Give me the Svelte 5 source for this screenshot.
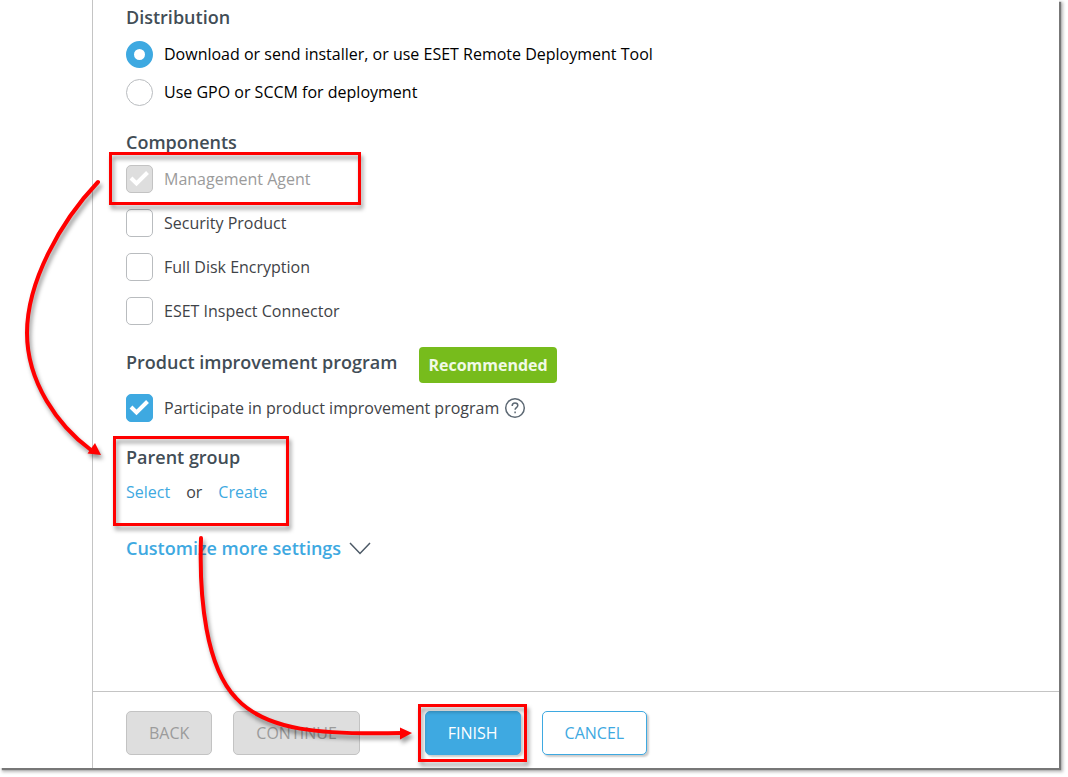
<script lang="ts">
  interface ComponentItem {
    id: string;
    label: string;
    checked: boolean;
    locked?: boolean;
  }

  let distribution = $state('installer');
  let participate = $state(true);

  let components: ComponentItem[] = $state([
    { id: 'agent', label: 'Management Agent', checked: true, locked: true },
    { id: 'security', label: 'Security Product', checked: false },
    { id: 'encryption', label: 'Full Disk Encryption', checked: false },
    { id: 'inspect', label: 'ESET Inspect Connector', checked: false }
  ]);
</script>

<div class="page">
  <div class="window">
    <div class="sidebar"></div>

    <main class="wizard">
      <form class="content" id="installer-form">
        <h2>Distribution</h2>
        <label class="radio-row">
          <input type="radio" name="distribution" value="installer" bind:group={distribution} />
          <span>Download or send installer, or use ESET Remote Deployment Tool</span>
        </label>
        <label class="radio-row">
          <input type="radio" name="distribution" value="gpo" bind:group={distribution} />
          <span>Use GPO or SCCM for deployment</span>
        </label>

        <h2 class="components">Components</h2>
        {#each components as item (item.id)}
          <label class="check-row" class:locked={item.locked}>
            <span class="box">
              <input type="checkbox" bind:checked={item.checked} disabled={item.locked} />
              <svg viewBox="0 0 27 28" aria-hidden="true"><path d="M5 13 10.5 18.5 21.500 7.500" /></svg>
            </span>
            <span>{item.label}</span>
          </label>
        {/each}

        <div class="program">
          <h2>Product improvement program</h2>
          <span class="badge">Recommended</span>
        </div>
        <div class="participate">
          <label class="check-row">
            <span class="box">
              <input type="checkbox" bind:checked={participate} />
              <svg viewBox="0 0 27 28" aria-hidden="true"><path d="M5 13 10.5 18.5 21.500 7.500" /></svg>
            </span>
            <span>Participate in product improvement program</span>
          </label>
          <button type="button" class="help" aria-label="Help">
            <svg viewBox="0 0 22 22" aria-hidden="true">
              <circle cx="11" cy="11" r="9.3" />
              <path d="M8.2 8.9c0-1.7 1.2-2.8 2.8-2.8s2.8 1 2.8 2.5c0 2-2.7 2.2-2.7 4.2" />
              <path d="M11.1 14.6v1.6" />
            </svg>
          </button>
        </div>

        <h2 class="parent">Parent group</h2>
        <p class="links">
          <a href="#select">Select</a>
          <span>or</span>
          <a href="#create">Create</a>
        </p>

        <button type="button" class="more">
          Customize more settings
          <svg viewBox="0 0 22 13" aria-hidden="true"><path d="M1 1 11 11.5 21 1" /></svg>
        </button>
      </form>

      <footer>
        <button type="button" class="btn back" disabled>BACK</button>
        <button type="button" class="btn continue" disabled>CONTINUE</button>
        <button type="button" class="btn finish">FINISH</button>
        <button type="button" class="btn cancel">CANCEL</button>
      </footer>
    </main>
  </div>

  <!-- walkthrough marks drawn over the form -->
  <svg class="marks" width="1060" height="777" viewBox="0 0 1060 777" aria-hidden="true">
    <g class="frames">
      <rect x="110.5" y="153.5" width="249" height="50" />
      <rect x="114.5" y="437.5" width="173" height="87" />
      <rect x="419.5" y="705.5" width="106" height="55" />
    </g>
    <g class="arrows">
      <path d="M98 182C60 222 27 282 27 333C27 382 58 426 91 450" />
      <path d="M201 538C199 598 206 667 236 698C266 731 322 735 402 733" />
    </g>
    <g class="heads">
      <path d="M101 455 95 443 87.5 453.5Z" />
      <path d="M412 733 400 727.5V739.5Z" />
    </g>
  </svg>
</div>

<style>
  :global(body) {
    background: #fff;
  }

  .page {
    position: relative;
    display: flex;
    min-height: 100vh;
    box-sizing: border-box;
    padding: 0 9px 9px 0;
    overflow: hidden;
    font-family: 'Open Sans', 'Noto Sans', sans-serif;
    font-size: 16px;
    line-height: 24px;
    color: #3f4347;
  }

  .window {
    flex: 1;
    display: flex;
    background: #fff;
    box-shadow: 2px 2px 1px #777, 3px 3px 3px 1px #bbb;
  }

  .sidebar {
    width: 92px;
    border-right: 1px solid #c4c4c4;
  }

  .wizard {
    flex: 1;
    display: flex;
    flex-direction: column;
  }

  .content {
    flex: 1;
    padding: 5px 33px 0;
  }

  h2 {
    margin: 0;
    font-size: 18px;
    font-weight: 600;
    line-height: 24px;
    color: #424d56;
  }

  .radio-row,
  .check-row {
    display: flex;
    align-items: center;
    gap: 11px;
    width: fit-content;
  }

  .radio-row {
    height: 38px;
    color: #000;
  }

  h2 + .radio-row {
    margin-top: 6px;
  }

  .check-row {
    height: 44px;
  }

  .locked {
    color: #9b9b9b;
  }

  input {
    appearance: none;
    flex: none;
    display: block;
    box-sizing: border-box;
    width: 27px;
    height: 27px;
    margin: 0;
    border: 1px solid #b9bcbf;
    background: #fff;
  }

  input[type='radio'] {
    border-radius: 50%;
  }

  input[type='radio']:checked {
    border: 8px solid #3ea9e1;
  }

  input[type='checkbox'] {
    height: 28px;
    border-radius: 5px;
  }

  input[type='checkbox']:checked {
    border-color: #3ea9e1;
    background: #3ea9e1;
  }

  input[type='checkbox']:disabled {
    border-color: #c3c3c3;
    background: #dedede;
  }

  .box {
    position: relative;
  }

  .box svg {
    position: absolute;
    inset: 0;
    display: none;
    fill: none;
    stroke: #fff;
    stroke-width: 4;
    pointer-events: none;
  }

  .box input:checked + svg {
    display: block;
  }

  .components {
    margin: 19px 0 3px;
  }

  .program {
    display: flex;
    align-items: flex-start;
    gap: 22px;
    margin-top: 14px;
  }

  .program h2 {
    line-height: 30px;
  }

  .badge {
    padding: 0 9px;
    border-radius: 4px;
    background: #77bc1c;
    color: #f1f9e6;
    font-weight: 700;
    line-height: 36px;
  }

  .participate {
    display: flex;
    align-items: center;
    gap: 5px;
    margin-top: 3px;
  }

  button {
    font: inherit;
    cursor: pointer;
  }

  .help {
    width: 22px;
    height: 22px;
    padding: 0;
    border: 0;
    background: none;
  }

  .help svg {
    display: block;
    fill: none;
    stroke: #5c6873;
    stroke-width: 1.5;
  }

  .parent {
    margin-top: 15px;
  }

  .links {
    display: flex;
    gap: 16px;
    margin: 11px 0 0;
  }

  a {
    color: #3ea9e1;
    text-decoration: none;
  }

  .more {
    display: flex;
    align-items: center;
    gap: 8px;
    margin-top: 32px;
    padding: 0;
    border: 0;
    background: none;
    color: #3ea9e1;
    font-size: 18px;
    font-weight: 600;
  }

  .more svg {
    width: 22px;
    height: 13px;
    fill: none;
    stroke: #4c5966;
    stroke-width: 1.5;
  }

  footer {
    display: flex;
    padding: 19px 33px 13px;
    border-top: 1px solid #c4c4c4;
  }

  .btn {
    height: 44px;
    padding: 0 22px;
    border: 1px solid #3ea9e1;
    border-radius: 5px;
  }

  .btn:disabled {
    border-color: #c3c3c3;
    background: #dedede;
    color: #9b9b9b;
    cursor: default;
  }

  .back {
    margin-right: 21px;
  }

  .continue {
    margin-right: 65px;
  }

  .finish {
    margin-right: 21px;
    background: #3ea9e1;
    color: #fff;
    box-shadow: 2px 2px 2px #ccc;
  }

  .cancel {
    background: #fff;
    color: #3ea9e1;
    box-shadow: 2px 2px 2px #ccc;
  }

  .marks {
    position: absolute;
    top: 0;
    left: 0;
    fill: none;
    pointer-events: none;
    filter: drop-shadow(2px 4px 2px rgba(0, 0, 0, 0.4));
  }

  .frames {
    stroke: #f00;
    stroke-width: 3;
  }

  .arrows {
    stroke: #f00;
    stroke-width: 4;
    stroke-linecap: round;
  }

  .heads {
    fill: #f00;
  }
</style>
